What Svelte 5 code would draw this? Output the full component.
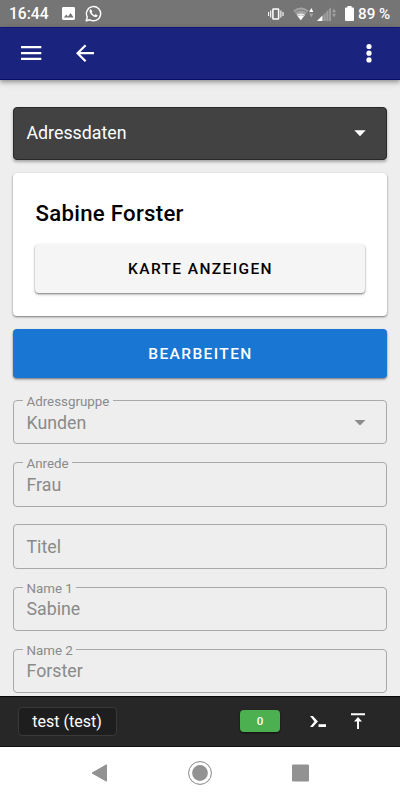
<script>
  let title = "Sabine Forster"
  let user = "test (test)"
  let pending = 0

  let fields = [
    { label: "Adressgruppe", value: "Kunden", select: true },
    { label: "Anrede", value: "Frau" },
    { label: "Titel", value: "" },
    { label: "Name 1", value: "Sabine" },
    { label: "Name 2", value: "Forster" },
  ]
</script>

<div class="screen">
  <div class="status">
    <span class="time">16:44</span>
    <svg class="photo" width="13" height="13" viewBox="0 0 13 13">
      <rect width="13" height="13" rx="1.4" fill="#fff" />
      <path d="M1.8 10.6 4.3 7.4 6 9.5 8.6 6 11.6 10.6z" fill="#757575" />
    </svg>
    <svg class="whatsapp" width="17" height="17" viewBox="0 0 17 17">
      <path d="M1.2 15.8 2.3 12A7.1 7.1 0 1 1 5 14.8z" fill="none" stroke="#fff" stroke-width="1.4" stroke-linejoin="round" />
      <path d="M5.9 4.3c-.5-.2-1.6.7-1.4 2 .3 2.3 3.1 5.3 5.9 5.7 1.3.2 2.2-.7 2.1-1.8l-2-1-1 1.1c-1.400-.5-2.300-1.500-2.900-2.700l.8-1z" fill="#fff" />
    </svg>
    <span class="space"></span>
    <svg class="vibrate" width="16" height="12" viewBox="0 0 16 12" fill="none" stroke="#fff">
      <rect x="4.9" y="1" width="5.7" height="10" rx=".6" stroke-width="1.5" />
      <path d="M2.7 2.5v7M12.9 2.5v7" stroke-width="1.1" />
      <path d="M.6 4v4M15 4v4" stroke-width="1.1" />
    </svg>
    <svg class="wifi" width="21" height="14" viewBox="0 0 21 14">
      <path d="M.2 3.5Q8 -2.5 15.5 3.5L7.8 13.2z" fill="#a2a2a2" />
      <path d="M1.7 5.3Q7.8 .8 14 5.3" fill="none" stroke="#777" stroke-width=".9" />
      <path d="M3.8 8Q7.8 4.8 11.9 8L7.8 13.2z" fill="#fff" />
      <path d="M4.3 8.9q3.5-2 7 0" fill="none" stroke="#999" stroke-width=".7" />
      <path d="M16.2 5 18.3 1l2.1 4z" fill="#fff" />
      <path d="m16.2 6.5 2.1 4 2.1-4z" fill="#a2a2a2" />
    </svg>
    <svg class="signal" width="20" height="14" viewBox="0 0 20 14">
      <path d="M0 14 14 .2V14z" fill="#9e9e9e" />
      <path d="M0 14 5.5 8.6V14z" fill="#fff" />
      <path d="M6.1 7.5V14M8.9 5V14M11.6 2V14" stroke="#777" stroke-width=".6" />
      <path d="m15 5.3 2-3.8 2 3.8zM15 6.8l2 3.8 2-3.8z" fill="#a2a2a2" />
    </svg>
    <svg class="battery" width="9" height="15" viewBox="0 0 9 15">
      <path d="M2.4 0h4.2v1.5H8a1 1 0 0 1 1 1V14a1 1 0 0 1-1 1H1a1 1 0 0 1-1-1V2.5a1 1 0 0 1 1-1h1.4z" fill="#fff" />
    </svg>
    <span class="percent">89 %</span>
  </div>

  <header>
    <svg width="21" height="16" viewBox="0 0 21 16">
      <path d="M0 2.2h20.3M0 8.1h20.3M0 13.8h20.3" stroke="#fff" stroke-width="2.2" />
    </svg>
    <svg class="back" width="18" height="18" viewBox="0 0 18 18">
      <path d="M18 9.2H1.8M9.6 1.2l-8 8 8 8" fill="none" stroke="#fff" stroke-width="2.2" />
    </svg>
    <span class="space"></span>
    <svg width="6" height="20" viewBox="0 0 6 20" fill="#fff">
      <circle cx="3" cy="3.5" r="2.6" />
      <circle cx="3" cy="10.2" r="2.6" />
      <circle cx="3" cy="16.9" r="2.6" />
    </svg>
  </header>

  <main>
    <div class="section">
      <span>Adressdaten</span>
      <svg width="12" height="7" viewBox="0 0 12 7"><path d="M.3 .3h11.4L6 6.300z" fill="#fff" /></svg>
    </div>

    <div class="card">
      <h2>{title}</h2>
      <button type="button" class="map">Karte anzeigen</button>
    </div>

    <button type="button" class="edit">Bearbeiten</button>

    <div class="fields">
      {#each fields as field}
        <fieldset>
          {#if field.value}
            <legend>{field.label}</legend>
          {/if}
          <div class="value">
            <span>{field.value || field.label}</span>
            {#if field.select}
              <svg width="12" height="6" viewBox="0 0 12 6"><path d="M.5 0h11L6 5.5z" fill="#8b8b8b" /></svg>
            {/if}
          </div>
        </fieldset>
      {/each}
    </div>
  </main>

  <footer>
    <span class="user">{user}</span>
    <span class="space"></span>
    <span class="count">{pending}</span>
    <svg class="console" width="17" height="12" viewBox="0 0 17 12">
      <path d="M0 0h2.9l5 5.5-5 5.5H0l4.400-5.500z" fill="#fff" />
      <path d="M8.5 8.2H16v2.8H8.500z" fill="#fff" />
    </svg>
    <svg class="top" width="14" height="16" viewBox="0 0 14 16">
      <path d="M0 1.200h14M7 16V5" stroke="#fff" stroke-width="1.900" fill="none" />
      <path d="M3 8.400 7 4l4 4.400z" fill="#fff" />
    </svg>
  </footer>

  <nav>
    <svg width="17" height="18" viewBox="0 0 17 18">
      <path d="M1 9 15.5 .8V17.2z" fill="#929292" stroke="#929292" stroke-linejoin="round" />
    </svg>
    <svg width="24" height="24" viewBox="0 0 24 24">
      <circle cx="12" cy="12" r="11.4" fill="none" stroke="#858585" />
      <circle cx="12" cy="12" r="7.9" fill="#929292" />
    </svg>
    <svg width="17" height="18" viewBox="0 0 17 18">
      <rect y=".5" width="17" height="17" rx="1" fill="#929292" />
    </svg>
  </nav>
</div>

<style>
  :global(body) {
    background: #eee;
  }

  .screen {
    display: flex;
    flex-direction: column;
    width: 400px;
    height: 800px;
    overflow: hidden;
    background: #eee;
    font-family: Roboto, sans-serif;
  }

  svg {
    display: block;
    flex: none;
  }

  .space {
    flex: 1;
  }

  .status {
    display: flex;
    flex: none;
    align-items: center;
    box-sizing: border-box;
    height: 27px;
    padding: 0 9px;
    background: #757575;
    color: #fff;
    font-size: 15.6px;
    font-weight: 500;
  }

  .time {
    width: 40px;
  }

  .photo {
    margin-left: 13px;
  }

  .whatsapp {
    margin-left: 10px;
  }

  .wifi {
    margin-left: 9px;
  }

  .signal {
    margin-left: 3px;
  }

  .battery {
    margin-left: 8px;
  }

  .percent {
    width: 33px;
    margin-left: 4px;
    font-size: 15.2px;
    white-space: nowrap;
  }

  header {
    display: flex;
    flex: none;
    z-index: 1;
    align-items: center;
    box-sizing: border-box;
    height: 53px;
    padding: 0 28px 1px 21px;
    background: #1a237e;
    border-top: 1px solid #10167c;
    border-bottom: 1px solid #080d6b;
    box-shadow: 0 2px 4px rgba(0, 0, 0, .3), 0 3px 7px rgba(0, 0, 0, .12);
  }

  .back {
    margin-left: 34px;
  }

  main {
    flex: 1;
    min-height: 0;
    padding: 27px 13px 0;
    overflow: hidden;
  }

  .section {
    display: flex;
    align-items: center;
    justify-content: space-between;
    box-sizing: border-box;
    height: 53px;
    margin-bottom: 13px;
    padding: 0 20px 1px 12.500px;
    border: 1px solid #292929;
    border-radius: 4px;
    background: #424242;
    color: #fff;
    font-size: 17.78px;
    box-shadow: 0 2px 3px rgba(0, 0, 0, .3);
  }

  .card {
    box-sizing: border-box;
    height: 143px;
    margin-bottom: 13px;
    padding: 27px 22px 0;
    border-radius: 4px;
    background: #fff;
    box-shadow: 0 1px 2px rgba(0, 0, 0, .4), 0 1px 3px rgba(0, 0, 0, .15);
  }

  h2 {
    margin: 0 0 17px .6px;
    font-size: 22.2px;
    font-weight: 500;
    line-height: 27px;
    letter-spacing: .28px;
  }

  button {
    display: block;
    width: 100%;
    height: 49px;
    padding: 0 0 0 1px;
    border: 0;
    border-radius: 4px;
    font-family: inherit;
    font-size: 15.5px;
    font-weight: 500;
    letter-spacing: 1.39px;
    text-transform: uppercase;
    box-shadow: 0 1px 2px rgba(0, 0, 0, .4), 0 2px 3px rgba(0, 0, 0, .15);
  }

  .map {
    background: #f5f5f5;
    color: #000;
  }

  .edit {
    background: #1976d2;
    color: #fff;
  }

  .fields {
    display: flex;
    flex-direction: column;
    gap: 17.78px;
    padding-top: 22px;
  }

  fieldset {
    box-sizing: border-box;
    flex: none;
    width: 100%;
    height: 44.44px;
    min-width: 0;
    margin: 0;
    padding: 0;
    border: 1px solid #a9a9a9;
    border-radius: 4px;
    color: #8a8a8a;
  }

  legend {
    height: 1px;
    margin-left: 9px;
    padding: 0 3.5px;
    font-size: 13.33px;
    line-height: 3px;
  }

  .value {
    display: flex;
    align-items: center;
    justify-content: space-between;
    height: 43px;
    padding: 0 20px 0 12.5px;
    font-size: 17.78px;
  }

  footer {
    display: flex;
    flex: none;
    z-index: 1;
    align-items: center;
    box-sizing: border-box;
    height: 51px;
    padding: 0 35px 0 18px;
    border-top: 1px solid #080808;
    border-bottom: 1px solid #101010;
    background: #272727;
    color: #fff;
  }

  .user {
    box-sizing: border-box;
    width: 99px;
    height: 29px;
    padding-right: 1px;
    border: 1px solid #393939;
    border-radius: 4px;
    background: #1e1e1e;
    font-size: 16px;
    line-height: 27px;
    text-align: center;
  }

  .count {
    width: 40px;
    height: 22px;
    margin-bottom: 1px;
    border-radius: 4px;
    background: #4caf50;
    box-shadow: 0 1px 2px rgba(0, 0, 0, .6);
    font-size: 11.5px;
    font-weight: 500;
    line-height: 22px;
    text-align: center;
  }

  .console {
    margin: 0 24px 0 30px;
  }

  .top {
    margin-bottom: 2px;
  }

  nav {
    display: flex;
    flex: none;
    align-items: center;
    justify-content: space-between;
    box-sizing: border-box;
    height: 53px;
    padding: 0 91.5px 1px 90.5px;
    background: #fff;
  }
</style>
